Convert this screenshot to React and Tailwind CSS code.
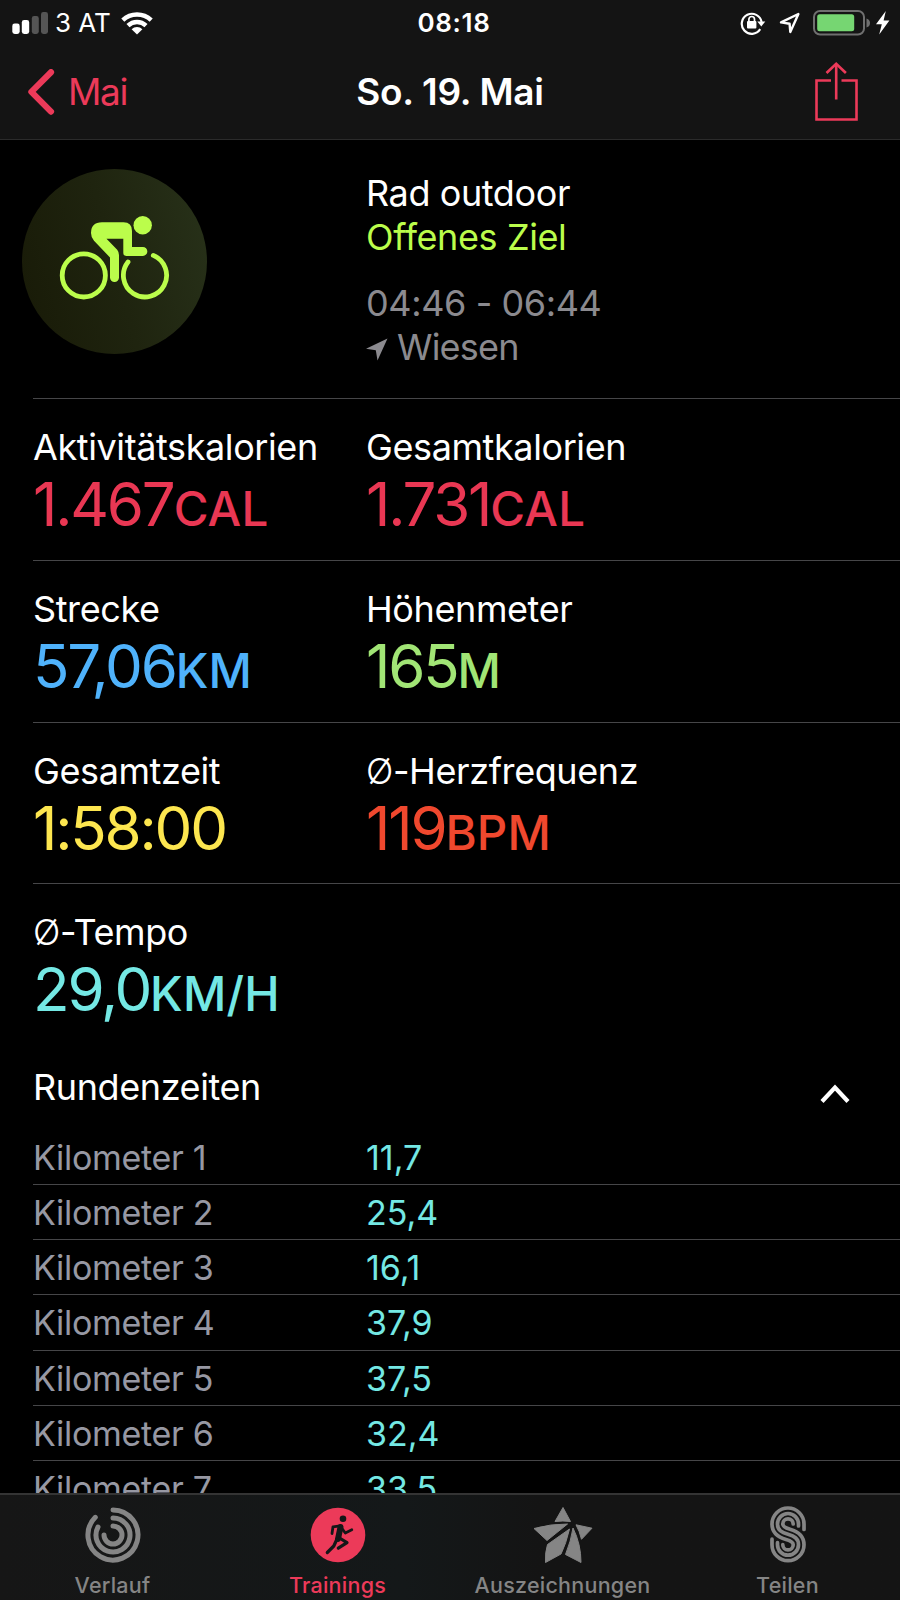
const stats = [
  [
    { label: "Aktivitätskalorien", value: "1.467", unit: "CAL", color: "text-[#e93753]" },
    { label: "Gesamtkalorien", value: "1.731", unit: "CAL", color: "text-[#e93753]" },
  ],
  [
    { label: "Strecke", value: "57,06", unit: "KM", color: "text-[#4fb2fb]" },
    { label: "Höhenmeter", value: "165", unit: "M", color: "text-[#a1e575]" },
  ],
  [
    { label: "Gesamtzeit", value: "1:58:00", unit: "", color: "text-[#fde64f]" },
    { label: "-Herzfrequenz", average: true, value: "119", unit: "BPM", color: "text-[#f0482e]" },
  ],
  [{ label: "-Tempo", average: true, value: "29,0", unit: "KM/H", color: "text-[#74e8e4]" }],
];

const laps = [
  { name: "Kilometer 1", value: "11,7" },
  { name: "Kilometer 2", value: "25,4" },
  { name: "Kilometer 3", value: "16,1" },
  { name: "Kilometer 4", value: "37,9" },
  { name: "Kilometer 5", value: "37,5" },
  { name: "Kilometer 6", value: "32,4" },
  { name: "Kilometer 7", value: "33,5" },
];

function StatusBar() {
  return (
    <div className="grid h-[46px] grid-cols-3 items-center pl-3 pr-[10px]">
      <div className="flex items-center">
        <svg width="37" height="24" viewBox="0 0 37 24">
          <rect x="0.3" y="12.5" width="7.4" height="10.5" rx="2.4" fill="#fff" />
          <rect x="9.8" y="9" width="7.4" height="14" rx="2.4" fill="#fff" />
          <rect x="19.8" y="5" width="7" height="18" rx="2.4" fill="#555" />
          <rect x="29" y="1" width="7" height="22" rx="2.4" fill="#555" />
        </svg>
        <span className="ml-[6px] text-[26px] leading-[46px]">3 AT</span>
        <svg className="ml-[10px]" width="32" height="24" viewBox="0 0 32 24">
          <g fill="none" stroke="#fff" strokeWidth="4.4">
            <path d="M1.8 9.2A20.5 20.5 0 0 1 30.2 9.2" />
            <path d="M7 14.6A13 13 0 0 1 25 14.6" />
          </g>
          <path d="M10.6 18.2a8 8 0 0 1 10.8 0L16 23.6z" fill="#fff" />
        </svg>
      </div>
      <div className="pl-[6px] text-center text-[26px] font-semibold leading-[46px] tracking-[0.7px]">
        08:18
      </div>
      <div className="flex items-center justify-end">
        <svg width="26" height="24" viewBox="0 0 26 24">
          <path
            d="M20.2 18.2A10 10 0 1 1 21.6 11"
            fill="none"
            stroke="#fff"
            strokeWidth="2.2"
          />
          <path d="M17.3 10.4h8l-4 5z" fill="#fff" />
          <rect x="7" y="10" width="9.4" height="7.6" rx="1" fill="#fff" />
          <path d="M8.9 11V8.3a2.8 2.8 0 0 1 5.6 0V11" fill="none" stroke="#fff" strokeWidth="1.7" />
        </svg>
        <svg className="ml-[13px]" width="22" height="22" viewBox="0 0 22 22">
          <path
            d="M19.4 2L2 10.4l8.6 1.4.7 8.2z"
            fill="none"
            stroke="#fff"
            strokeWidth="2.4"
            strokeLinejoin="round"
          />
        </svg>
        <svg className="ml-[12px]" width="58" height="26" viewBox="0 0 58 26">
          <rect x="1" y="1" width="50" height="23.5" rx="6" fill="none" stroke="#6f6f6f" strokeWidth="2" />
          <rect x="4.2" y="4.2" width="37" height="17" rx="2.5" fill="#76d672" />
          <path d="M53.5 8.5q3.5 1 3.5 4.5t-3.5 4.5z" fill="#6f6f6f" />
        </svg>
        <svg className="ml-[5px]" width="14" height="24" viewBox="0 0 14 24">
          <path d="M9.8 0L0 13.2h5.8L3.2 23.5 13.4 9.6H7.6z" fill="#fff" />
        </svg>
      </div>
    </div>
  );
}

function NavBar() {
  return (
    <div className="grid h-[91px] grid-cols-3 items-center px-[27px]">
      <div className="flex items-center text-[#ec3a59]">
        <svg width="28" height="46" viewBox="0 0 28 46">
          <path
            d="M24 3.2L4.4 22.9 24 42.6"
            fill="none"
            stroke="currentColor"
            strokeWidth="6.2"
            strokeLinecap="round"
            strokeLinejoin="round"
          />
        </svg>
        <span className="ml-[13px] text-[37px] leading-[46px] tracking-[-1.4px]">Mai</span>
      </div>
      <h1 className="whitespace-nowrap text-center text-[37px] font-semibold leading-[46px] tracking-[-0.3px]">
        So. 19. Mai
      </h1>
      <svg className="mr-[15px] justify-self-end" width="43" height="60" viewBox="0 0 43 60">
        <g fill="none" stroke="#ec3a59" strokeWidth="2.6">
          <path d="M16 18.500H1.500v39h40v-39H26.500" />
          <path d="M21.200 37.500V2" />
          <path d="M11.500 11L21.200 1.800l9.700 9.200" />
        </g>
      </svg>
    </div>
  );
}

function CyclingBadge() {
  return (
    <div className="flex h-[185px] w-[185px] rounded-full bg-linear-75 from-[#181a07] via-[#1f240f] to-[#28321a]">
      <svg width="185" height="185" viewBox="0 0 185 185" className="text-[#bbfd4b]">
        <g fill="none" stroke="currentColor" strokeWidth="4.8" strokeLinecap="round">
          <circle cx="61.8" cy="106.400" r="21.600" />
          <path d="M131.300 86.400A21.600 21.600 0 1 1 106 93" />
        </g>
        <circle cx="120.700" cy="56.300" r="9.200" fill="currentColor" />
        <path
          d="M80 53.300H101.500Q110 53.300 110 62V78H120.900a4.450 4.450 0 0 1 0 8.900H104.500Q101.300 86.900 101.300 83.700V69.700H84.500L95.200 80.700Q97 83 97 86V108.500a4.500 4.500 0 0 1-9 0V88.500L72 71.800Q69 68.500 69 64 69 53.300 80 53.300Z"
          fill="currentColor"
        />
      </svg>
    </div>
  );
}

function Hero() {
  return (
    <section className="flex h-[258px] pl-[22px] pt-[29px]">
      <CyclingBadge />
      <div className="ml-[159px] text-[36px] leading-[44px] tracking-[-0.4px]">
        <p className="mt-[1.500px]">Rad outdoor</p>
        <p className="text-[#bbfd4b]">Offenes Ziel</p>
        <div className="mt-[22px] text-[#8b8a8f]">
          <p>04:46 - 06:44</p>
          <p className="flex items-center">
            <svg className="mt-1" width="22" height="24" viewBox="0 0 22 24">
              <path d="M21.500 1.500L0 11.800l9.800 1.400L11.500 23.500z" fill="currentColor" />
            </svg>
            <span className="ml-[9px] tracking-[-0.8px]">Wiesen</span>
          </p>
        </div>
      </div>
    </section>
  );
}

function Stat({ label, average, value, unit, color }) {
  return (
    <div>
      <p className="text-[36px] leading-[44px] tracking-[-0.4px]">
        {average && <span className="font-light">Ø</span>}
        {label}
      </p>
      <p className={`mt-[5px] whitespace-nowrap text-[60px] leading-[60px] tracking-[-2.200px] ${color}`}>
        {value}
        <span className="text-[47.500px] font-medium leading-none tracking-[0.200px]">{unit}</span>
      </p>
    </div>
  );
}

function LapTimes() {
  return (
    <section className="pt-[12px]">
      <div className="flex h-[60px] items-center justify-between pr-[50px]">
        <h2 className="text-[36px] leading-[44px] tracking-[-0.4px]">Rundenzeiten</h2>
        <svg className="mt-[14px]" width="30" height="20" viewBox="0 0 30 20">
          <path d="M2 17.500L15 3.500l13 14" fill="none" stroke="#fff" strokeWidth="4.200" />
        </svg>
      </div>
      <ul className="mt-[13px] text-[34px] leading-[56px]">
        {laps.map((lap) => (
          <li
            key={lap.name}
            className="grid h-[55.1px] grid-cols-[333px_1fr] border-b border-[#464648]"
          >
            <span className="tracking-[-0.3px] text-[#9798a3]">{lap.name}</span>
            <span className="text-[#74e8e4]">{lap.value}</span>
          </li>
        ))}
      </ul>
    </section>
  );
}

function ActivityIcon() {
  return (
    <svg width="56" height="56" viewBox="0 0 56 56">
      <g fill="none" stroke="currentColor" strokeWidth="5" strokeLinecap="round">
        <path d="M28 3A25 25 0 1 1 10.300 10.300" />
        <path d="M28 11A17 17 0 1 1 13 20" />
        <path d="M28 19A9 9 0 1 1 19 28" />
      </g>
    </svg>
  );
}

function RunnerIcon() {
  return (
    <svg width="56" height="56" viewBox="0 0 56 56">
      <circle cx="28" cy="28" r="27.300" fill="currentColor" />
      <circle cx="33" cy="11.700" r="3.300" fill="#141718" />
      <g fill="none" stroke="#141718" strokeLinecap="round" strokeLinejoin="round">
        <path d="M22 26.500L23 19.800 30 18.800 35.300 26 41.800 22.800" strokeWidth="2.800" />
        <path d="M30.500 20L28 32" strokeWidth="6" />
        <path d="M27 32L23.800 39 17.300 45.500" strokeWidth="3.200" />
        <path d="M29.500 31L37 35.700 28.300 41.200" strokeWidth="3.200" />
      </g>
    </svg>
  );
}

function AwardIcon() {
  return (
    <svg width="60" height="58" viewBox="0 0 60 58">
      <g fill="currentColor" stroke="currentColor" strokeWidth="1" strokeLinejoin="round">
        <path d="M30 1.500L37.500 15.500Q30 14.500 22 15.500z" />
        <path d="M1 22.500Q18 17.800 34.500 18L14 34.500z" />
        <path d="M43 18.800L59 22.200 48.500 33.300Q46.500 25 43 18.800z" />
        <path d="M36.500 23Q33 38 28 48L12.500 56.500Q12 46 14.500 38.500z" />
        <path d="M40 22Q48 38 48 56.500L32.500 48.500Q38 35 40 22z" />
      </g>
    </svg>
  );
}

// three parallel strands, point-symmetric around the middle of the S
function SharingIcon() {
  return (
    <svg width="38" height="58" viewBox="0 0 38 58">
      <g fill="none" stroke="currentColor" strokeWidth="3.700" strokeLinecap="round">
        <path d="M35 23.500V18A16 16 0 0 0 3 18C3 28 10 31.500 17 33.500Q24.200 35.500 24.200 38.700A5.200 5.200 0 0 1 13.800 38.700" />
        <path d="M29.500 20V18A10.500 10.500 0 0 0 8.500 18C8.500 24.500 13 26.500 19 28.350C25 30.200 29.500 32.200 29.500 38.700A10.500 10.500 0 0 1 8.500 38.700V36.700" />
        <path d="M24.200 18A5.200 5.200 0 0 0 13.800 18Q13.800 21.200 21 23.200C28 25.200 35 28.700 35 38.700A16 16 0 0 1 3 38.700V33.200" />
      </g>
    </svg>
  );
}

const tabs = [
  { label: "Verlauf", icon: <ActivityIcon /> },
  { label: "Trainings", icon: <RunnerIcon />, active: true },
  { label: "Auszeichnungen", icon: <AwardIcon /> },
  { label: "Teilen", icon: <SharingIcon /> },
];

function TabBar() {
  return (
    <nav className="grid h-[107px] shrink-0 grid-cols-4 border-t-2 border-[#343434] bg-linear-to-r from-[#161616] via-[#141819] via-45% to-[#141414] to-60%">
      {tabs.map((tab) => (
        <button
          key={tab.label}
          type="button"
          className={`flex flex-col items-center pt-[11px] ${
            tab.active ? "text-[#ec3a59]" : "text-[#858585]"
          }`}
        >
          <span className="flex h-[58px] items-center">{tab.icon}</span>
          <span className="mt-[8px] text-[21.500px] font-medium leading-[26px] tracking-[0.25px]">
            {tab.label}
          </span>
        </button>
      ))}
    </nav>
  );
}

export default function App() {
  return (
    <div className="flex h-[1600px] w-[900px] flex-col overflow-hidden bg-black font-['Inter',sans-serif] text-white">
      <header className="h-[140px] shrink-0 border-b border-[#2b2b2b] bg-[#141414]">
        <StatusBar />
        <NavBar />
      </header>
      <main className="min-h-0 flex-1 overflow-hidden">
        <Hero />
        <div className="pl-[33px]">
          {stats.map((row) => (
            <section
              key={row[0].label}
              className="grid h-[161.8px] grid-cols-[333px_1fr] border-t border-[#464648] pt-[26px]"
            >
              {row.map((stat) => (
                <Stat key={stat.label} {...stat} />
              ))}
            </section>
          ))}
          <LapTimes />
        </div>
      </main>
      <TabBar />
    </div>
  );
}
